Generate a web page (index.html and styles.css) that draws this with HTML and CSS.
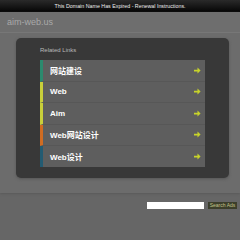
FILE: index.html
```html
<!doctype html>
<html lang="en">
<head>
	<meta charset="UTF-8">
	<title>aim-web.us</title>
	<link rel="stylesheet" href="styles.css">
</head>
<body>
	<div class="topbar">This Domain Name Has Expired - Renewal Instructions.</div>
	<div class="wrap">
		<div class="logo">aim-web.us</div>
		<div class="panel">
			<div class="heading">Related Links</div>
			<ul class="links">
				<li class="c1"><span>网站建设</span><svg viewBox="0 0 8 8"><path d="M0 3h4V0.5L7.5 4 4 7.5V5H0z"/></svg></li>
				<li class="c2"><span>Web</span><svg viewBox="0 0 8 8"><path d="M0 3h4V0.5L7.5 4 4 7.5V5H0z"/></svg></li>
				<li class="c3"><span>Aim</span><svg viewBox="0 0 8 8"><path d="M0 3h4V0.5L7.5 4 4 7.5V5H0z"/></svg></li>
				<li class="c4"><span>Web网站设计</span><svg viewBox="0 0 8 8"><path d="M0 3h4V0.5L7.5 4 4 7.5V5H0z"/></svg></li>
				<li class="c5"><span>Web设计</span><svg viewBox="0 0 8 8"><path d="M0 3h4V0.5L7.5 4 4 7.5V5H0z"/></svg></li>
			</ul>
		</div>
	</div>
	<div class="search">
		<input type="text" class="box">
		<button class="btn">Search Ads</button>
	</div>
</body>
</html>
```

FILE: styles.css
```css
body,html{margin: 0;padding: 0;}
body{background: #666;font-family: "Liberation Sans", Arial, sans-serif;}
ul,li{list-style: none;margin: 0;padding: 0;}
.topbar{height: 12px;line-height: 12px;background: linear-gradient(#2a2a2a,#050505);color: #eee;font-size: 5.3px;text-align: center;}
.wrap{background: #6c6c6c;padding-bottom: 15px;box-shadow: 0 1px 2px #5a5a5a;}
.logo{height: 20px;line-height: 21px;padding-left: 7px;font-size: 9px;color: #a9a9a9;background: #6e6e6e;border-bottom: 1px solid #777;margin-bottom: 5px;}
.panel{margin: 0 11px 0 16px;background: #383838;border-radius: 5px;padding: 7px 24px 11px;box-shadow: 0 1px 3px #555;}
.heading{font-size: 6px;color: #b8b8b8;line-height: 10px;margin-bottom: 5px;}
.links li{display: flex;align-items: center;justify-content: space-between;height: 20.5px;border-bottom: 1px solid #575757;background: #5e5e5e;padding: 0 4px 0 7px;border-left: 3px solid #c8cf3a;}
.links li span{color: #fff;font-weight: bold;font-size: 8px;font-family: "Liberation Sans", "Noto Sans CJK SC", sans-serif;}
.links li svg{width: 7px;height: 7px;fill: #c7d32a;}
.links .c1{border-left-color: #2b8a6e;}
.links .c2{border-left-image: linear-gradient(#8fb040,#d8de3a) 1;}
.links .c3{border-left-image: linear-gradient(#d8de3a,#e0c030) 1;}
.links .c4{border-left-color: #d06c22;}
.links .c5{border-left-color: #235b72;border-bottom: none;}
.search{display: flex;justify-content: flex-end;align-items: center;gap: 4px;padding: 9px 3px 0 0;}
.box{width: 57px;height: 7px;border: none;padding: 0;margin: 0;background: #fff;}
.btn{height: 7px;width: 29px;padding: 0;margin: 0;border: none;background: #3c3e2a;color: #c2c48a;font-size: 5px;line-height: 7px;font-family: "Liberation Sans", Arial, sans-serif;}
```
